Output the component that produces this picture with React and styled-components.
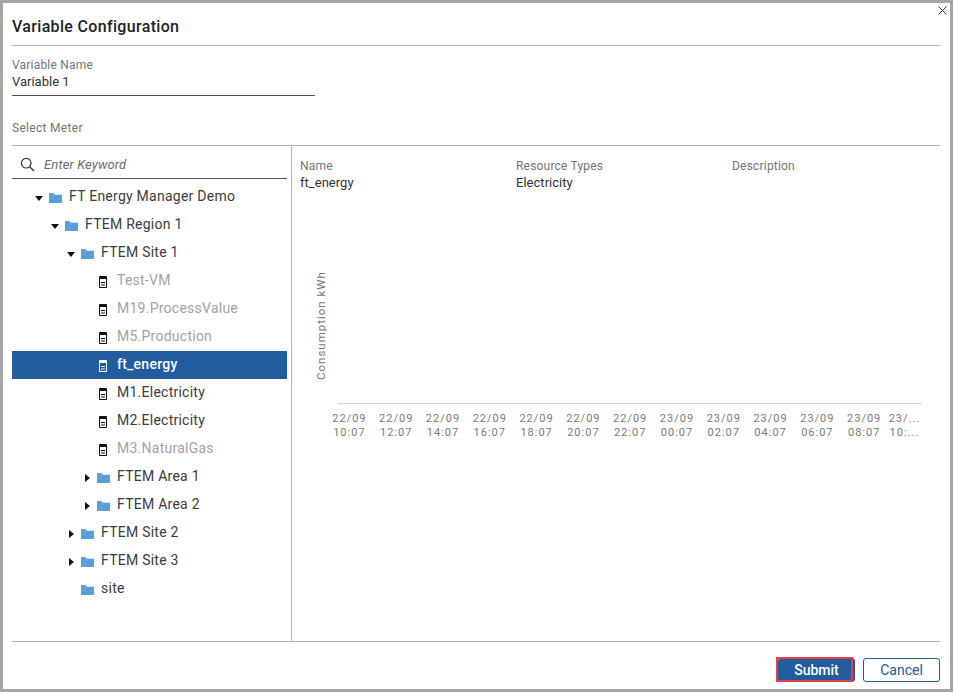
import React from 'react';
import styled, { createGlobalStyle } from 'styled-components';

const GlobalStyle = createGlobalStyle`
  html, body {
    margin: 0;
    padding: 0;
    background: #a6a6a6;
  }
  body {
    font-family: Roboto, "Liberation Sans", sans-serif;
  }
`;

const Frame = styled.div`
  width: 953px;
  height: 692px;
  box-sizing: border-box;
  border: 3px solid #a6a6a6;
  background: #fff;
`;

const Dialog = styled.div`
  position: relative;
  height: 100%;
  box-sizing: border-box;
  padding: 0 10px 0 9px;
  display: flex;
  flex-direction: column;
`;

const CloseButton = styled.svg`
  position: absolute;
  top: 3px;
  right: 3px;
  width: 9px;
  height: 9px;
`;

const Title = styled.h2`
  margin: 0;
  height: 43px;
  box-sizing: border-box;
  padding-top: 14px;
  font-size: 16px;
  line-height: 20px;
  font-weight: 500;
  color: #1f1f1f;
  letter-spacing: 0.33px;
  border-bottom: 1px solid #b5b5b5;
`;

const Field = styled.div`
  margin-top: 11px;
  width: 303px;
  height: 39px;
  box-sizing: border-box;
  border-bottom: 1px solid #555;
`;

const FieldLabel = styled.div`
  font-size: 12px;
  line-height: 16px;
  color: #757575;
  letter-spacing: 0.2px;
`;

const FieldValue = styled.div`
  font-size: 13px;
  line-height: 17px;
  color: #333;
  letter-spacing: 0;
`;

const SectionLabel = styled(FieldLabel)`
  margin-top: 24px;
  height: 25px;
  letter-spacing: 0.3px;
  border-bottom: 1px solid #b5b5b5;
`;

const Body = styled.div`
  flex: 1;
  display: flex;
  min-height: 0;
  border-bottom: 1px solid #b5b5b5;
`;

const TreePanel = styled.div`
  width: 280px;
  box-sizing: border-box;
  padding-right: 4px;
  border-right: 1px solid #b5b5b5;
`;

const SearchRow = styled.div`
  height: 33px;
  box-sizing: border-box;
  padding: 5px 0 0 8px;
  display: flex;
  align-items: center;
  gap: 9px;
  border-bottom: 1px solid #555;
`;

const SearchText = styled.span`
  font-size: 13px;
  font-style: italic;
  color: #6b6b6b;
  letter-spacing: 0.13px;
`;

const TreeList = styled.div`
  margin-top: 4px;
`;

const Row = styled.div`
  height: 28px;
  box-sizing: border-box;
  padding-bottom: 2px;
  display: flex;
  align-items: center;
  padding-left: ${p => 22 + p.$level * 16}px;
  background: ${p => (p.$selected ? '#215c9e' : 'transparent')};
  color: ${p => (p.$selected ? '#fff' : p.$muted ? '#a3a3a3' : '#3c3c3c')};
  font-size: 14px;
  font-weight: ${p => (p.$selected ? 500 : 400)};
  letter-spacing: 0.25px;
`;

const CaretSlot = styled.span`
  width: 10px;
  height: 10px;
  margin: 4px 4px 0 0;
  display: flex;
  align-items: center;
  justify-content: center;
`;

const IconSlot = styled.span`
  width: 14px;
  height: 14px;
  margin: 4px 7px 0 0;
  display: flex;
  align-items: center;
  justify-content: center;
`;

const DetailPanel = styled.div`
  flex: 1;
  min-width: 0;
  padding: 12px 18px 0 8px;
  display: flex;
  flex-direction: column;
`;

const InfoRow = styled.div`
  display: grid;
  grid-template-columns: 216px 216px 1fr;
  height: 34px;
`;

const InfoColumn = styled.div`
  font-size: 12px;
  line-height: 16px;
  color: #757575;
  letter-spacing: 0.2px;
`;

const InfoValue = styled.div`
  font-size: 13px;
  line-height: 17px;
  color: #333;
  letter-spacing: 0.03px;
`;

const Chart = styled.div`
  display: flex;
  margin-top: 25px;
`;

const AxisTitle = styled.div`
  width: 46px;
  height: 187px;
  margin-top: 15px;
  box-sizing: border-box;
  padding: 0 0 0 18px;
  writing-mode: vertical-rl;
  transform: rotate(180deg);
  display: flex;
  align-items: flex-end;
  justify-content: center;
  font-size: 11.5px;
  color: #777;
  letter-spacing: 1px;
  white-space: nowrap;
`;

const Plot = styled.div`
  flex: 1;
  min-width: 0;
  margin-left: -8px;
`;

const PlotArea = styled.div`
  height: 187px;
  box-sizing: border-box;
  border-bottom: 1px solid #ccd3da;
`;

const Ticks = styled.div`
  display: grid;
  grid-template-columns: repeat(13, 46.8px);
  margin: 8px 0 0 -12px;
`;

const Tick = styled.div`
  text-align: center;
  font-size: 11px;
  line-height: 14px;
  color: #7a7a7a;
  letter-spacing: 1px;
  white-space: nowrap;
  margin-right: ${p => (p.$clipped ? 13 : 0)}px;
`;

const Footer = styled.div`
  height: 47px;
  box-sizing: border-box;
  padding-top: 16px;
  display: flex;
  justify-content: flex-end;
  gap: 8px;
`;

const SubmitButton = styled.button`
  position: relative;
  width: 77px;
  height: 24px;
  box-sizing: border-box;
  padding: 0;
  font-family: inherit;
  font-size: 14px;
  font-weight: 500;
  color: #fff;
  background: #215c9e;
  border: 1px solid #215c9e;
  border-radius: 3px;

  &::after {
    content: '';
    position: absolute;
    top: -2px;
    left: -3px;
    width: 77px;
    height: 25px;
    box-sizing: border-box;
    border: 2px solid #ee3a43;
  }
`;

const CancelButton = styled.button`
  width: 77px;
  height: 24px;
  box-sizing: border-box;
  padding: 0;
  font-family: inherit;
  font-size: 14px;
  color: #215c9e;
  background: #fff;
  border: 1px solid #215c9e;
  border-radius: 3px;
`;

const CloseIcon = () => (
  <CloseButton viewBox="0 0 9 9">
    <path d="M0.5 0.5 L8.5 8.5 M8.5 0.5 L0.5 8.5" stroke="#333" strokeWidth="1" fill="none" />
  </CloseButton>
);

const SearchIcon = () => (
  <svg width="15" height="15" viewBox="0 0 15 15">
    <circle cx="6.2" cy="6.2" r="4.8" stroke="#333" strokeWidth="1.2" fill="none" />
    <path d="M9.7 9.7 L14 14" stroke="#333" strokeWidth="1.3" fill="none" />
  </svg>
);

const Caret = ({ open }) => (
  <CaretSlot>
    {open === undefined ? null : open ? (
      <svg width="8" height="5" viewBox="0 0 8 5">
        <path d="M0 0 H8 L4 5 Z" fill="#111" />
      </svg>
    ) : (
      <svg width="5" height="8" viewBox="0 0 5 8">
        <path d="M0 0 V8 L5 4 Z" fill="#111" />
      </svg>
    )}
  </CaretSlot>
);

const FolderIcon = () => (
  <IconSlot>
    <svg width="13" height="10" viewBox="0 0 13 10">
      <path d="M0 0 H4.5 L6 1.8 H13 V10 H0 Z" fill="#5b9fd8" />
    </svg>
  </IconSlot>
);

const MeterIcon = ({ selected }) => {
  const c = selected ? '#fff' : '#111';
  const inner = selected ? '#215c9e' : '#fff';
  return (
    <IconSlot>
      <svg width="8" height="12" viewBox="0 0 8 12">
        <rect x="0" y="0" width="8" height="12" rx="0.8" fill={c} />
        <rect x="1" y="3" width="6" height="8" fill={inner} />
        <rect x="2" y="6" width="4" height="1" fill={c} />
        <rect x="2" y="8.5" width="4" height="1" fill={c} />
      </svg>
    </IconSlot>
  );
};

const nodes = [
  { label: 'FT Energy Manager Demo', level: 0, open: true, type: 'folder' },
  { label: 'FTEM Region 1', level: 1, open: true, type: 'folder' },
  { label: 'FTEM Site 1', level: 2, open: true, type: 'folder' },
  { label: 'Test-VM', level: 3, type: 'meter', muted: true },
  { label: 'M19.ProcessValue', level: 3, type: 'meter', muted: true },
  { label: 'M5.Production', level: 3, type: 'meter', muted: true },
  { label: 'ft_energy', level: 3, type: 'meter', selected: true },
  { label: 'M1.Electricity', level: 3, type: 'meter' },
  { label: 'M2.Electricity', level: 3, type: 'meter' },
  { label: 'M3.NaturalGas', level: 3, type: 'meter', muted: true },
  { label: 'FTEM Area 1', level: 3, open: false, type: 'folder' },
  { label: 'FTEM Area 2', level: 3, open: false, type: 'folder' },
  { label: 'FTEM Site 2', level: 2, open: false, type: 'folder' },
  { label: 'FTEM Site 3', level: 2, open: false, type: 'folder' },
  { label: 'site', level: 2, type: 'folder' },
];

const ticks = [
  ['22/09', '10:07'],
  ['22/09', '12:07'],
  ['22/09', '14:07'],
  ['22/09', '16:07'],
  ['22/09', '18:07'],
  ['22/09', '20:07'],
  ['22/09', '22:07'],
  ['23/09', '00:07'],
  ['23/09', '02:07'],
  ['23/09', '04:07'],
  ['23/09', '06:07'],
  ['23/09', '08:07'],
  ['23/...', '10:...'],
];

const App = () => {
  return (
    <Frame>
      <GlobalStyle />
      <Dialog>
        <CloseIcon />
        <Title>Variable Configuration</Title>
        <Field>
          <FieldLabel>Variable Name</FieldLabel>
          <FieldValue>Variable 1</FieldValue>
        </Field>
        <SectionLabel>Select Meter</SectionLabel>
        <Body>
          <TreePanel>
            <SearchRow>
              <SearchIcon />
              <SearchText>Enter Keyword</SearchText>
            </SearchRow>
            <TreeList>
              {nodes.map(n => (
                <Row key={n.label} $level={n.level} $muted={n.muted} $selected={n.selected}>
                  <Caret open={n.open} />
                  {n.type === 'folder' ? <FolderIcon /> : <MeterIcon selected={n.selected} />}
                  {n.label}
                </Row>
              ))}
            </TreeList>
          </TreePanel>
          <DetailPanel>
            <InfoRow>
              <InfoColumn>
                Name
                <InfoValue>ft_energy</InfoValue>
              </InfoColumn>
              <InfoColumn>
                Resource Types
                <InfoValue>Electricity</InfoValue>
              </InfoColumn>
              <InfoColumn>Description</InfoColumn>
            </InfoRow>
            <Chart>
              <AxisTitle>Consumption kWh</AxisTitle>
              <Plot>
                <PlotArea />
                <Ticks>
                  {ticks.map((t, i) => (
                    <Tick key={i} $clipped={i === ticks.length - 1}>
                      {t[0]}
                      <br />
                      {t[1]}
                    </Tick>
                  ))}
                </Ticks>
              </Plot>
            </Chart>
          </DetailPanel>
        </Body>
        <Footer>
          <SubmitButton>Submit</SubmitButton>
          <CancelButton>Cancel</CancelButton>
        </Footer>
      </Dialog>
    </Frame>
  );
};

export default App;
